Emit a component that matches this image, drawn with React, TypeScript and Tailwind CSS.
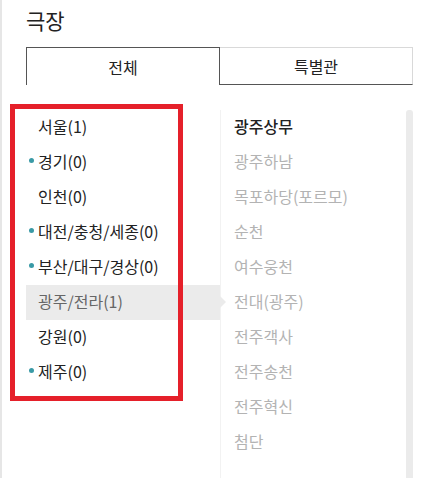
const regions = [
  { name: '서울', count: 1, dot: false },
  { name: '경기', count: 0, dot: true },
  { name: '인천', count: 0, dot: false },
  { name: '대전/충청/세종', count: 0, dot: true },
  { name: '부산/대구/경상', count: 0, dot: true },
  { name: '광주/전라', count: 1, dot: false },
  { name: '강원', count: 0, dot: false },
  { name: '제주', count: 0, dot: true },
];

const theaters = [
  '광주상무',
  '광주하남',
  '목포하당(포르모)',
  '순천',
  '여수웅천',
  '전대(광주)',
  '전주객사',
  '전주송천',
  '전주혁신',
  '첨단',
];

const selectedRegion = '광주/전라';

export default function App() {
  return (
    <div
      className="relative h-[478px] w-[438px] overflow-hidden border-l-2 border-[#e6e6e6] bg-white pl-[24px]"
      style={{ fontFamily: '"Noto Sans CJK KR", "Noto Sans", sans-serif' }}
    >
      <h1 className="pt-[5px] text-[21px] leading-[31px] text-[#222]">극장</h1>

      <div className="mt-[11px] flex h-[38px] w-[387px]">
        <button className="flex-1 border border-b-0 border-[#555] text-[16px] text-[#222]">전체</button>
        <button className="flex-1 border-t border-r border-b border-t-[#d9d9d9] border-r-[#d9d9d9] border-b-[#555] text-[16px] text-[#222]">
          특별관
        </button>
      </div>

      <div className="mt-[25px] flex w-[387px]">
        <ul className="w-[194px]">
          {regions.map((r) => {
            const active = r.name === selectedRegion;
            return (
              <li
                key={r.name}
                className={`relative flex h-[35px] items-center pb-[3px] pl-[12px] text-[16px] ${
                  active ? 'bg-[#ebebeb] text-[#666]' : 'text-[#222]'
                }`}
              >
                {r.dot && <span className="absolute left-[3px] top-[13px] h-[5px] w-[5px] rounded-full bg-[#3a9aa6]" />}
                {r.name}({r.count})
                {active && (
                  <span className="absolute right-[-6px] top-[11px] h-0 w-0 border-y-[6px] border-l-[6px] border-y-transparent border-l-[#ebebeb]" />
                )}
              </li>
            );
          })}
        </ul>

        <div className="flex h-[400px] flex-1 border-l border-[#f2f2f2]">
          <ul className="flex-1 pl-[13px]">
            {theaters.map((t, i) => (
              <li
                key={t}
                className={`flex h-[35px] items-center pb-[3px] text-[16px] ${i === 0 ? 'font-medium text-[#222]' : 'text-[#b3b3b3]'}`}
              >
                {t}
              </li>
            ))}
          </ul>
          <div className="w-[7px] rounded-t-[3px] bg-[#ebebeb]" />
        </div>
      </div>

      <div className="pointer-events-none absolute left-[8px] top-[104px] h-[297px] w-[173px] border-[5px] border-[#e5202a]" />
    </div>
  );
}
